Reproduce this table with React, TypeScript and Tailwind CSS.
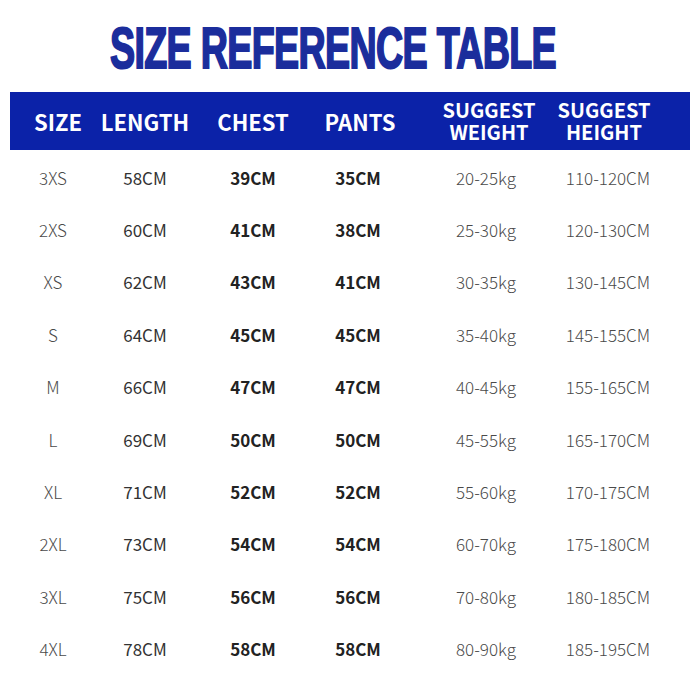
const rows = [
  ["3XS", "58CM", "39CM", "35CM", "20-25kg", "110-120CM"],
  ["2XS", "60CM", "41CM", "38CM", "25-30kg", "120-130CM"],
  ["XS", "62CM", "43CM", "41CM", "30-35kg", "130-145CM"],
  ["S", "64CM", "45CM", "45CM", "35-40kg", "145-155CM"],
  ["M", "66CM", "47CM", "47CM", "40-45kg", "155-165CM"],
  ["L", "69CM", "50CM", "50CM", "45-55kg", "165-170CM"],
  ["XL", "71CM", "52CM", "52CM", "55-60kg", "170-175CM"],
  ["2XL", "73CM", "54CM", "54CM", "60-70kg", "175-180CM"],
  ["3XL", "75CM", "56CM", "56CM", "70-80kg", "180-185CM"],
  ["4XL", "78CM", "58CM", "58CM", "80-90kg", "185-195CM"],
];

const cellStyles = [
  "font-light text-[#4a4a4a]",
  "font-normal text-[#333]",
  "font-bold text-[#222]",
  "font-bold text-[#222]",
  "font-light text-[#4a4a4a]",
  "font-light text-[#4a4a4a]",
];

export default function App() {
  return (
    <div className="w-[700px] h-[700px] bg-white overflow-hidden font-['Noto_Sans_CJK_SC',sans-serif]">
      <div className="h-[92px] flex items-center pl-[110px] pt-[4px]">
        <h1 className="whitespace-nowrap font-['Liberation_Sans',sans-serif] font-bold text-[57px] leading-none text-[#1b2d9c] tracking-[-1px] origin-left scale-x-[0.66] [-webkit-text-stroke:2px_#1b2d9c]">
          SIZE REFERENCE TABLE
        </h1>
      </div>

      <div className="mx-[10px] h-[58px] bg-[#0b22a8] grid grid-cols-[96px_78px_138px_72px_184px_60px] items-center text-white font-bold">
        <div className="flex justify-center text-[22px] leading-none">SIZE</div>
        <div className="flex justify-center text-[22px] leading-none">LENGTH</div>
        <div className="flex justify-center text-[22px] leading-none">CHEST</div>
        <div className="flex justify-center text-[22px] leading-none pl-[4px]">PANTS</div>
        <div className="flex flex-col items-center text-[20px] leading-[22px] pl-[6px]">
          <span className="whitespace-nowrap">SUGGEST</span>
          <span className="whitespace-nowrap">WEIGHT</span>
        </div>
        <div className="flex flex-col items-center text-[20px] leading-[22px] -ml-[8px]">
          <span className="whitespace-nowrap">SUGGEST</span>
          <span className="whitespace-nowrap">HEIGHT</span>
        </div>
      </div>

      <div className="pt-[1px]">
        {rows.map((row) => (
          <div key={row[0]} className="h-[52.4px] grid grid-cols-[106px_78px_138px_72px_184px_60px] items-center">
            {row.map((cell, i) => (
              <div key={i} className={`flex justify-center whitespace-nowrap text-[17px] leading-none ${cellStyles[i]}`}>
                {cell}
              </div>
            ))}
          </div>
        ))}
      </div>
    </div>
  );
}
